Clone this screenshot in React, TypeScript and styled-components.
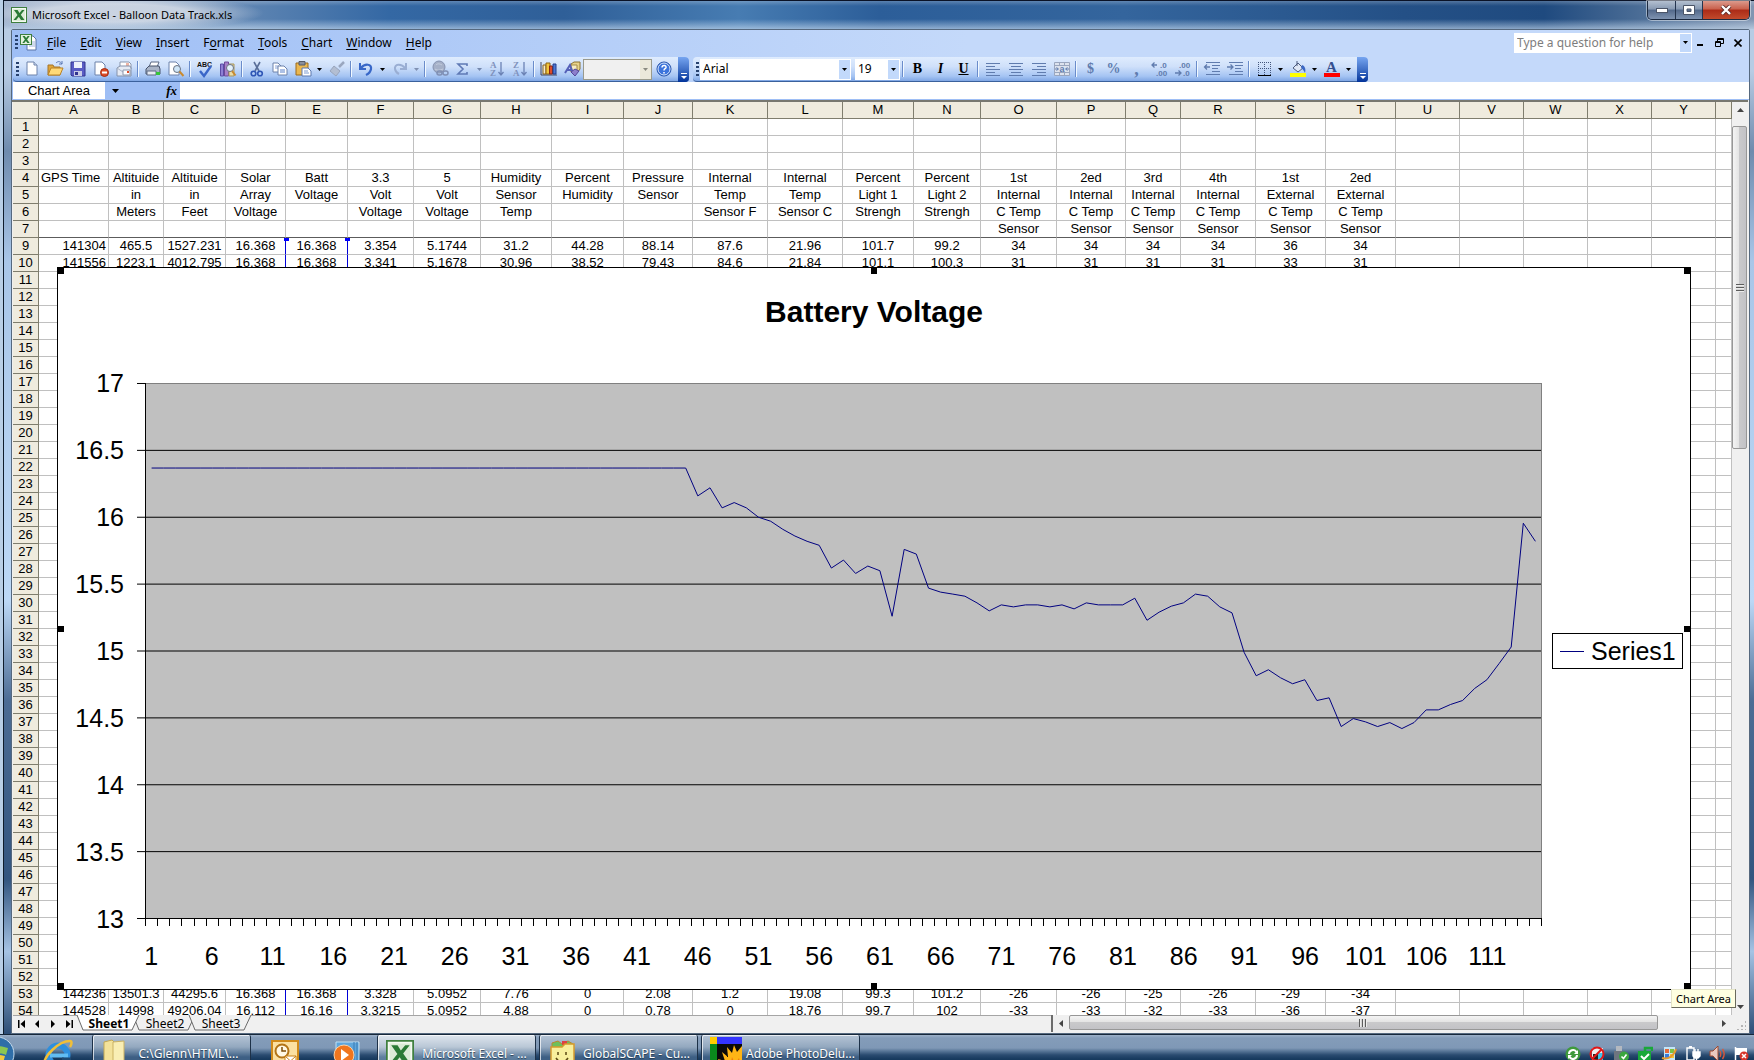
import React from "react";
import styled, { createGlobalStyle, css } from "styled-components";

const UI = `"Noto Sans", "Open Sans", sans-serif`;
const ARIAL = `"Liberation Sans", Arial, sans-serif`;

const Global = createGlobalStyle`
  * { box-sizing: border-box; }
  html, body, #root { height: 100%; margin: 0; }
  body { overflow: hidden; background: #16243a; font: 12px/16px ${UI}; color: #000; }
  button, select, input { font: inherit; color: inherit; margin: 0; padding: 0; border: 0; border-radius: 0; background: none; }
  svg { display: block; flex: none; }
`;

const Desktop = styled.div`
  height: 100vh;
  min-height: 600px;
  display: flex;
  flex-direction: column;
  overflow: hidden;
`;

const Window = styled.main`
  flex: 1;
  min-height: 0;
  display: flex;
  flex-direction: column;
  margin-left: 3px;
  border-left: 1px solid #101d2c;
  border-top: 1px solid #0a1226;
  box-shadow: -3px 0 0 #b9cfe6;
  padding: 0 4px 0 7px;
  background: linear-gradient(180deg, #b8cce4 0, #b8cce4 70px, #6f8bad 150px, #a9c6e8 260px, #bcd8f6 600px, #4c6c94 700px, #33557f 85%, #a5c3e4 92%, #2c4d76 100%);
`;

const TitleBar = styled.header`
  height: 28px;
  flex: none;
  display: flex;
  align-items: flex-start;
  margin: 0 -4px 0 -7px;
  padding-left: 7px;
  background:
    linear-gradient(180deg, rgba(255,255,255,.22) 0, rgba(255,255,255,0) 5px, rgba(255,255,255,0) 18px, rgba(210,228,246,.6) 100%),
    radial-gradient(ellipse 150px 18px at 110px 12px, rgba(216,222,232,.85) 50%, rgba(216,222,232,0) 100%),
    linear-gradient(90deg, #8ea3c2 0, #5d84b2 14%, #3468a4 22%, #2f5f98 32%, #477cb2 42%, #2c5e99 50%, #34659d 64%, #245086 80%, #1f4a7f 88%, #4f7098 94%, #8296b2 100%);
`;

const TitleText = styled.h1`
  flex: 1;
  margin: 6px 0 0 5px;
  font: 400 11px/16px ${UI};
`;

const TitleIcon = styled.span`
  margin-top: 6px;
`;

const Caption = styled.div`
  display: flex;
  height: 19px;
  margin-right: 4px;
  border: 1px solid #1c2a40;
  border-top: 0;
  border-radius: 0 0 5px 5px;
  overflow: hidden;
  box-shadow: 0 0 0 1px rgba(255, 255, 255, 0.45);
`;

const CaptionButton = styled.button<{ $close?: boolean }>`
  width: ${(p) => (p.$close ? 47 : 27)}px;
  display: flex;
  align-items: center;
  justify-content: center;
  background: ${(p) =>
    p.$close
      ? "linear-gradient(180deg, #dc9a8c 0, #c9604c 45%, #ab2b17 50%, #c24a2c 100%)"
      : "linear-gradient(180deg, #b4c0d0 0, #8799b2 45%, #53698b 50%, #7f93b0 100%)"};
  & + & { border-left: 1px solid #24344e; }
`;

const Client = styled.div`
  flex: 1;
  min-height: 0;
  display: flex;
  flex-direction: column;
  border: 1px solid #56697f;
  border-radius: 2px 2px 0 0;
  background: #f0f0f0;
`;

const CommandArea = styled.div`
  flex: none;
  background: linear-gradient(90deg, #9ebef5 0, #c4d9fa 55%);
`;

const MenuBar = styled.nav`
  height: 27px;
  display: flex;
  align-items: center;
  padding: 0 0 2px 3px;
`;

const Grip = styled.span`
  width: 3px;
  height: 15px;
  flex: none;
  background: repeating-linear-gradient(180deg, #27416f 0, #27416f 2px, transparent 2px, transparent 4px);
`;

const MenuIcon = styled.span`
  margin: 0 2px;
`;

const MenuButton = styled.button`
  padding: 0 7px;
  line-height: 20px;
  u { text-underline-offset: 2px; }
`;

const HelpBox = styled.label`
  margin-left: auto;
  width: 178px;
  height: 20px;
  display: flex;
  background: #fff;
  padding: 1px;
  input { flex: 1; min-width: 0; padding-left: 2px; outline: none; }
  input::placeholder { color: #7d7d7d; opacity: 1; }
`;

const DropMark = styled.span<{ $muted?: boolean }>`
  width: 11px;
  flex: none;
  display: flex;
  align-items: center;
  justify-content: center;
  background: ${(p) => (p.$muted ? "#ebe8da" : "#c2d9fb")};
  pointer-events: none;
`;

const DocButtons = styled.div`
  display: flex;
  gap: 3px;
  padding-right: 3px;
  button { width: 16px; height: 18px; display: flex; align-items: center; justify-content: center; }
`;

const ToolbarRow = styled.div`
  display: flex;
  gap: 4px;
  padding-left: 1px;
`;

const Toolbar = styled.div`
  height: 25px;
  display: flex;
  align-items: center;
  padding-left: 3px;
  border-radius: 4px;
  border-bottom: 1px solid #3b619c;
  background: linear-gradient(180deg, #dfecfe 0, #cfe0fa 40%, #a5c4f3 80%, #7fa6e4 100%);
`;

const ToolButton = styled.button`
  width: 23px;
  height: 22px;
  display: flex;
  align-items: center;
  justify-content: center;
`;

const ArrowButton = styled.button`
  width: 11px;
  height: 22px;
  display: flex;
  align-items: center;
  justify-content: center;
`;

const Separator = styled.span`
  width: 6px;
  height: 16px;
  flex: none;
  background: linear-gradient(90deg, transparent 2px, #6a8ccb 2px, #6a8ccb 3px, #f1f9ff 3px, #f1f9ff 4px, transparent 4px);
`;

const EndCap = styled.button`
  width: 11px;
  height: 25px;
  margin: 0 0 -1px 3px;
  display: flex;
  align-items: flex-end;
  justify-content: center;
  padding-bottom: 3px;
  border-radius: 0 4px 4px 0;
  background: linear-gradient(180deg, #76a5f0 0, #3f6fc6 50%, #02339a 100%);
`;

const Combo = styled.label<{ $w: number; $disabled?: boolean }>`
  width: ${(p) => p.$w}px;
  height: 21px;
  display: flex;
  padding: 1px;
  background: ${(p) => (p.$disabled ? "#f0f0f0" : "#fff")};
  ${(p) => p.$disabled && css`border: 1px solid #9a9a8c; padding: 0;`}
  & + & { margin-left: 4px; }
  select { appearance: none; flex: 1; min-width: 0; padding-left: 2px; outline: none; opacity: 1; }
`;

const GripSpace = styled.span`
  display: flex;
  width: 4px;
`;

const Letter = styled.span<{ $i?: boolean; $u?: boolean; $c?: string; $s?: number }>`
  font: ${(p) => (p.$i ? "italic " : "")}bold ${(p) => p.$s || 14}px/16px "Liberation Serif", "Times New Roman", serif;
  text-decoration: ${(p) => (p.$u ? "underline" : "none")};
  color: ${(p) => p.$c || "#000"};
`;

const FormulaBar = styled.div`
  height: 18px;
  display: flex;
  background: #9ebef5;
  padding: 0 0 1px 1px;
`;

const NameBox = styled.input`
  width: 92px;
  background: #fff;
  font: 13px/16px ${ARIAL};
  text-align: center;
`;

const NameDrop = styled.button`
  width: 20px;
  display: flex;
  align-items: center;
  justify-content: center;
`;

const FxButton = styled.button`
  margin-left: auto;
  padding-right: 3px;
  font: italic bold 13px/16px "Liberation Serif", serif;
`;

const FxZone = styled.div`
  width: 75px;
  display: flex;
`;

const FormulaInput = styled.input`
  flex: 1;
  background: #fff;
  outline: none;
`;

const Workspace = styled.div`
  position: relative;
  flex: 1;
  min-height: 0;
  display: flex;
  margin-right: 1px;
  border-top: 2px solid #77776f;
  padding-left: 1px;
  background: #f0f0f0;
`;

const GridPane = styled.section`
  position: relative;
  flex: 1;
  min-width: 0;
  overflow: hidden;
  background: #fff;
`;

const Sheet = styled.table`
  width: 100%;
  table-layout: fixed;
  border-collapse: separate;
  border-spacing: 0;
  font: 13px/16px ${ARIAL};
`;

const HeadCell = styled.th`
  height: 17px;
  padding: 0;
  font-weight: 400;
  text-align: center;
  background: #efebde;
  border-right: 1px solid #7f7d6d;
  border-bottom: 1px solid #7f7d6d;
`;

const Cell = styled.td<{ $align?: string; $frozen?: boolean; $range?: boolean }>`
  position: relative;
  height: 17px;
  padding: 0 2px;
  text-align: ${(p) => p.$align || "center"};
  white-space: nowrap;
  border-right: 1px solid ${(p) => (p.$range ? "#0000d8" : "#c0c0c0")};
  border-bottom: 1px solid ${(p) => (p.$frozen ? "#5c5c5c" : "#c0c0c0")};
`;

const RangeHandle = styled.i<{ $right?: boolean }>`
  position: absolute;
  top: 0;
  ${(p) => (p.$right ? "right: -3px;" : "left: -2px;")}
  width: 5px;
  height: 3px;
  background: #0000ff;
`;

/* ---- chart ---- */

const ChartFrame = styled.figure`
  position: absolute;
  top: 165px;
  left: 44px;
  right: 41px;
  bottom: 25px;
  margin: 0;
  display: flex;
  flex-direction: column;
  background: #fff;
  border: 1px solid #000;
  font: 25px/30px ${ARIAL};
`;

const Handle = styled.i<{ $x: string; $y: string }>`
  position: absolute;
  width: 6px;
  height: 6px;
  background: #000;
  left: ${(p) => ({ l: "0", c: "calc(50% - 3px)", r: "calc(100% - 6px)" } as Record<string, string>)[p.$x]};
  top: ${(p) => ({ t: "0", m: "calc(50% - 3px)", b: "calc(100% - 6px)" } as Record<string, string>)[p.$y]};
`;

const ChartTitle = styled.figcaption`
  flex: none;
  height: 115px;
  padding-top: 27px;
  text-align: center;
  font: 700 30px/34px ${ARIAL};
`;

const ChartBody = styled.div`
  flex: 1;
  min-height: 0;
  display: grid;
  grid-template-columns: 87px 1fr 148px;
  grid-template-rows: 1fr 70px;
`;

const YAxis = styled.div`
  display: flex;
  flex-direction: column;
  justify-content: space-between;
  margin: -15px 0;
  padding-right: 21px;
  text-align: right;
`;

const Plot = styled.svg`
  width: 100%;
  height: 100%;
  min-height: 0;
  overflow: visible;
  shape-rendering: crispEdges;
`;

const XAxis = styled.div`
  grid-column: 2;
  display: grid;
  grid-template-columns: repeat(23, 1fr);
  padding-top: 22px;
  margin: 0 calc(200% / 115) 0 calc(-200% / 115);
  text-align: center;
`;

const Legend = styled.div`
  align-self: center;
  display: flex;
  align-items: center;
  gap: 7px;
  height: 36px;
  margin: 0 7px 0 10px;
  padding-left: 7px;
  border: 1px solid #000;
  &::before { content: ""; width: 24px; border-top: 1px solid #000080; }
`;

const Tooltip = styled.div`
  position: absolute;
  right: 12px;
  bottom: 7px;
  padding: 0 4px;
  font-size: 11px;
  line-height: 17px;
  background: #ffffe1;
  border: 1px solid #e4e4c8;
  border-right-color: #6a6a5c;
  border-bottom-color: #6a6a5c;
`;

/* ---- scroll bars ---- */

const VScroll = styled.div`
  width: 16px;
  flex: none;
  display: flex;
  flex-direction: column;
  background: #f0f0f0;
`;

const ScrollArrow = styled.button`
  width: 16px;
  height: 16px;
  flex: none;
  display: flex;
  align-items: center;
  justify-content: center;
`;

const Track = styled.div<{ $row?: boolean }>`
  flex: 1;
  min-width: 0;
  min-height: 0;
  display: flex;
  flex-direction: ${(p) => (p.$row ? "row" : "column")};
  padding: ${(p) => (p.$row ? "0" : "8px 0 0")};
`;

const Thumb = styled.div<{ $row?: boolean }>`
  ${(p) => (p.$row ? "width: 91%; height: 15px;" : "height: 37%; width: 15px;")}
  display: flex;
  align-items: center;
  justify-content: center;
  border: 1px solid #979797;
  border-radius: 2px;
  background: linear-gradient(${(p) => (p.$row ? 180 : 90)}deg, #f4f4f4 0, #e4e4e4 45%, #c9c9cb 50%, #c2c2c6 100%);
`;

const ThumbGrip = styled.i<{ $row?: boolean }>`
  width: 8px;
  height: 8px;
  background: repeating-linear-gradient(${(p) => (p.$row ? 90 : 180)}deg, #5d5d5d 0, #5d5d5d 1px, #f8f8f8 1px, #c8c8c8 3px);
`;

const SheetBar = styled.footer`
  height: 18px;
  flex: none;
  display: flex;
  padding: 0 1px 1px 1px;
  background: #f0f0f0;
`;

const TabZone = styled.div`
  width: 59.8%;
  flex: none;
  display: flex;
  border-top: 1px solid #a5a5a5;
`;

const NavButton = styled.button`
  width: 16px;
  display: flex;
  align-items: center;
  justify-content: center;
`;

const SheetTab = styled.button<{ $active?: boolean }>`
  position: relative;
  width: 56px;
  height: 16px;
  line-height: 14px;
  font-weight: ${(p) => (p.$active ? 700 : 400)};
  svg { position: absolute; left: -5px; top: -1px; z-index: 0; }
  span { position: relative; z-index: 1; }
  ${(p) => p.$active && css`z-index: 2;`}
`;

const Tabs = styled.div`
  display: flex;
  margin-left: 4px;
`;

const HScroll = styled.div`
  flex: 1;
  display: flex;
  border-left: 2px solid #6c6c6c;
`;

const SizeGrip = styled.i`
  align-self: flex-end;
  width: 10px;
  height: 10px;
  margin: 0 2px 2px 4px;
  background: radial-gradient(circle, #b4b4b4 1px, transparent 1px) 0 0 / 4px 4px;
  clip-path: polygon(100% 0, 100% 100%, 0 100%);
`;

/* ---- task bar ---- */

const TaskbarClip = styled.div`
  height: 26px;
  flex: none;
  overflow: hidden;
  border-top: 1px solid #16273a;
`;

const Taskbar = styled.div`
  position: relative;
  height: 38px;
  display: flex;
  background: linear-gradient(180deg, #9db1c9 0, #849cb9 3px, #7f98b6 13px, #4d6c8e 17px, #2a4b70 20px, #173a5e 24px, #173a5e 100%);
`;

const StartSlot = styled.button`
  width: 15px;
  margin-right: 6px;
  overflow: hidden;
  display: flex;
  justify-content: flex-end;
  padding-top: 1px;
`;

const TaskIcon = styled.button<{ $w: number }>`
  width: ${(p) => p.$w}px;
  display: flex;
  align-items: center;
  justify-content: center;
`;

const TaskButton = styled.button<{ $active?: boolean }>`
  width: 159px;
  margin-right: 3px;
  display: flex;
  align-items: center;
  padding-left: 8px;
  color: #fff;
  white-space: nowrap;
  text-align: left;
  border: 1px solid #1d3148;
  border-top: 0;
  border-radius: 2px;
  box-shadow: inset 1px 1px 0 rgba(255, 255, 255, 0.7);
  background: ${(p) =>
    p.$active
      ? "linear-gradient(180deg, #dfe6ee 0, #b9c7d6 12px, #8ea4bb 17px, #5f7f9f 22px, #4f7294 100%)"
      : "linear-gradient(180deg, #b6c5d6 0, #93a8bf 12px, #6884a2 17px, #3d5f84 22px, #3d5f84 100%)"};
  span { flex: 1; text-align: center; text-shadow: 0 1px 1px #22384f; }
`;

const Tray = styled.div`
  margin-left: auto;
  display: flex;
  align-items: center;
  padding-right: 1px;
`;

/* ---- icons ---- */

const Down = ({ c = "#000" }: { c?: string }) => (
  <svg width="5" height="3" viewBox="0 0 5 3"><path d="M0 0h5L2.5 3z" fill={c} /></svg>
);

const Ic = ({ children, s = 18 }: { children: React.ReactNode; s?: number }) => (
  <svg width={s} height={s} viewBox="0 0 18 18" fill="none">{children}</svg>
);

const Page = ({ x = 3, y = 2, w = 10, h = 13 }) => (
  <path d={`M${x} ${y}h${w - 3}l3 3v${h - 3}h${-w}z`} fill="#fff" stroke="#6c82ab" />
);

const decimalText = { fontFamily: "Liberation Sans", fontWeight: 700, fontSize: 8, fill: "#607cae" };

const icons: Record<string, React.ReactNode> = {
  New: <Ic><Page x={4} y={2} w={10} h={13} /><path d="M11 2v3h3" stroke="#6c82ab" fill="#d6e2f5" /></Ic>,
  Open: <Ic><path d="M2 15V5h5l1 2h6v8z" fill="#e0a537" stroke="#a4752a" /><path d="M2 15l3-7h12l-3 7z" fill="#ffd978" stroke="#b98226" /><path d="M10 3c2-2 4-2 6 1M16 1v3h-3" stroke="#5b78b5" /></Ic>,
  Save: <Ic><path d="M2 2h14v14H3l-1-1z" fill="#5a5cc4" stroke="#32348f" /><path d="M5 2h8v6H5z" fill="#eef1fb" /><path d="M5 11h8v5H5z" fill="#c9cbe6" /><path d="M6 12h3v3H6z" fill="#32348f" /></Ic>,
  Permission: <Ic><Page x={3} y={2} w={10} h={13} /><circle cx="12.500" cy="12.500" r="4" fill="#dc4a26" stroke="#a32c12" /><path d="M10 12.500h5" stroke="#fff" strokeWidth="2" /></Ic>,
  "E-mail": <Ic><path d="M5 8V2h9l2 2v5z" fill="#fff" stroke="#8b97ad" /><path d="M11 4h3M11 6h3" stroke="#dd6a4a" /><path d="M2 8l3-2h10l1 2v8H2z" fill="#e6ebf4" stroke="#8592aa" /><path d="M2 8l6 4 4-1" stroke="#a8b3c6" /><path d="M8 10h7v5H8z" fill="#fff" stroke="#8b97ad" /><path d="M12 11h2v2h-2z" fill="#dd4b2a" /></Ic>,
  Print: <Ic><path d="M5 7l2-5h8l-2 5z" fill="#fff" stroke="#5d6b85" /><path d="M2 9l3-3h10l1 3v5H2z" fill="#a9b4c7" stroke="#46526a" /><path d="M3 11h9v4H3z" fill="#e8ecf3" stroke="#5d6b85" /><path d="M12 12h4v3h-4z" fill="#35c439" /></Ic>,
  "Print preview": <Ic><Page x={2} y={2} w={10} h={13} /><circle cx="10" cy="9" r="3.500" fill="#cfe6f8" stroke="#6a7280" /><path d="M12.500 11.500l4 4.500" stroke="#c98a2f" strokeWidth="2" /></Ic>,
  Spelling: <Ic><text x="1" y="7" fontFamily="Liberation Sans" fontWeight="700" fontSize="7" fill="#111">ABC</text><path d="M4 11l4 5 7-10" stroke="#3a66c8" strokeWidth="2.400" /></Ic>,
  Research: <Ic><path d="M1.500 4h3v12h-3z" fill="#8f7fd4" stroke="#5b4ca6" /><path d="M5.500 2h4v14h-4z" fill="#a77fca" stroke="#6f4a98" /><path d="M10 4h5v12h-5z" fill="#ecdca6" stroke="#a8965a" /><circle cx="11" cy="8" r="3.500" fill="#e3f1fc" stroke="#6a7280" /><path d="M13 11l3.500 4.500" stroke="#c98a2f" strokeWidth="2" /></Ic>,
  Cut: <Ic><path d="M6 2l5 9M12 2l-5 9" stroke="#5a6f99" strokeWidth="1.600" /><circle cx="5.500" cy="13.500" r="2.300" stroke="#2e55b5" strokeWidth="1.600" /><circle cx="12" cy="13.500" r="2.300" stroke="#2e55b5" strokeWidth="1.600" /></Ic>,
  Copy: <Ic><Page x={2} y={3} w={8} h={9} /><path d="M4 6h4M4 8h4" stroke="#8aa4d6" /><Page x={7} y={6} w={9} h={9} /><path d="M9 10h5M9 12h5" stroke="#5b82cc" /></Ic>,
  Paste: <Ic><path d="M2 3h12v12H2z" fill="#eab750" stroke="#9b6a1c" /><path d="M5 1.500h6V5H5z" fill="#8a8f9c" stroke="#555b68" /><path d="M8 8h6l3 3v5H8z" fill="#fff" stroke="#5d79b0" /><path d="M10 11h4M10 13h5" stroke="#7d9ad0" /></Ic>,
  "Format painter": <Ic><path d="M16 2l-5 5" stroke="#9aa7bf" strokeWidth="2.500" /><path d="M6 6l6 5-4 5-6-5z" fill="#b3bed2" stroke="#98a5bd" /></Ic>,
  Undo: <Ic><path d="M3 3v6h6" stroke="#3867c8" strokeWidth="2" /><path d="M4 8c4-5 11-4 10 1-.500 3-3 5-5 6" stroke="#3867c8" strokeWidth="2.200" /></Ic>,
  Redo: <Ic><path d="M15 3v6H9" stroke="#9aaed3" strokeWidth="2" /><path d="M14 8C10 3 3 4 4 9c.500 3 2 4 4 5" stroke="#9aaed3" strokeWidth="2" /></Ic>,
  Hyperlink: <Ic><circle cx="8" cy="7" r="6" fill="#a5b0c7" stroke="#8592b0" /><path d="M5 5c2-2 4-1 6 0M4 9c3 2 5 1 8 0" stroke="#c5cedf" /><rect x="6" y="11" width="5" height="4" rx="2" stroke="#7f8fb4" strokeWidth="1.500" /><rect x="12" y="11" width="5" height="4" rx="2" stroke="#7f8fb4" strokeWidth="1.500" /></Ic>,
  AutoSum: <Ic><path d="M13 6V4H4l5 5-5 5h9v-2" stroke="#5f79b5" strokeWidth="1.600" /></Ic>,
  Chart: <Ic><path d="M1 2v13h16" stroke="#43455c" /><path d="M3 5h3v9H3z" fill="#f3ead0" stroke="#8c6212" /><path d="M6 3h4v11H6z" fill="#f3c43c" stroke="#8c6212" /><path d="M9.500 6h3v8h-3z" fill="#dc4b2a" stroke="#8d2510" /><path d="M13 4h3v10h-3z" fill="#4a76d4" stroke="#223f8e" /></Ic>,
  Drawing: <Ic><path d="M8 4l3-2h6v7l-2 3H8z" fill="#e7d28a" stroke="#8c7330" /><path d="M8 5h6v6H8z" fill="#f6ecc4" stroke="#a28b48" /><path d="M2 13L7 5l3 8M4 10h5" stroke="#5560b8" strokeWidth="2" /><path d="M8 12l4-3 4 2-4 5z" fill="#8c7ecb" stroke="#53479b" /></Ic>,
  Help: <Ic><circle cx="9" cy="9" r="7" fill="#3c74dc" stroke="#1d4ba4" /><circle cx="9" cy="9" r="6" stroke="#d4e4fb" /><path d="M7 7.500c0-3 4.500-2.500 4 0-.300 1.300-2 1.200-2 3M9 12v1.500" stroke="#fff" strokeWidth="1.500" /></Ic>,
  "Align left": <Ic><path d="M2 3h14M2 6h9M2 9h14M2 12h9M2 15h14" stroke="#607cae" shapeRendering="crispEdges" /></Ic>,
  "Align center": <Ic><path d="M2 3h14M4 6h10M2 9h14M4 12h10M2 15h14" stroke="#607cae" shapeRendering="crispEdges" /></Ic>,
  "Align right": <Ic><path d="M2 3h14M7 6h9M2 9h14M7 12h9M2 15h14" stroke="#607cae" shapeRendering="crispEdges" /></Ic>,
  Merge: <Ic><path d="M1.500 2.500h15v13h-15zM1.500 5.500h15M1.500 12.500h15M6.500 2.500v3M11.500 2.500v3M6.500 12.500v3M11.500 12.500v3" fill="#dde3ee" stroke="#9aa6be" /><path d="M2 9h3M13 9h3M3.500 7.500L5.500 9l-2 1.500M14.500 7.500L12.500 9l2 1.500" stroke="#607cae" /><text x="6.500" y="11.500" fontFamily="Liberation Sans" fontWeight="700" fontSize="9" fill="#607cae">a</text></Ic>,
  "Increase decimal": <Ic><path d="M1 5h5M3.500 2.500L1 5l2.500 2.500" stroke="#607cae" strokeWidth="1.300" /><text x="9" y="8" {...decimalText}>.0</text><text x="5" y="16" {...decimalText}>.00</text></Ic>,
  "Decrease decimal": <Ic><text x="5" y="8" {...decimalText}>.00</text><path d="M1 13h6M4.500 10.500L7 13l-2.500 2.500" stroke="#607cae" strokeWidth="1.300" /><text x="9" y="16" {...decimalText}>.0</text></Ic>,
  "Decrease indent": <Ic><path d="M3 2.500h14M9 5.500h8M9 8.500h6M9 11.500h8M3 14.500h14" stroke="#607cae" shapeRendering="crispEdges" /><path d="M1.500 7H7M4 4.500L1.500 7 4 9.500" stroke="#607cae" strokeWidth="1.300" /></Ic>,
  "Increase indent": <Ic><path d="M3 2.500h14M9 5.500h8M9 8.500h6M9 11.500h8M3 14.500h14" stroke="#607cae" shapeRendering="crispEdges" /><path d="M1 7h6M4.500 4.500L7 7 4.500 9.500" stroke="#607cae" strokeWidth="1.300" /></Ic>,
  Borders: <Ic><path d="M3 2.500h13M3 8.500h13M3.500 2v13M9.500 2v13M15.500 2v13" stroke="#43557c" strokeDasharray="1 1" shapeRendering="crispEdges" /><path d="M3 15.500h13" stroke="#000" shapeRendering="crispEdges" /></Ic>,
  "Fill color": <Ic><path d="M8 1v5M4 8l5-5 5 5-5 4z" fill="#dfe7f5" stroke="#4c5b7e" /><path d="M13 5c3 1 4 4 3 8-1-2-2-4-4-5z" fill="#3c68c4" /><path d="M1 13h16v4H1z" fill="#ff0" /></Ic>,
  "Font color": <Ic><text x="3" y="12" fontFamily="Liberation Serif" fontWeight="700" fontSize="15" fill="#34508f">A</text><path d="M1 13h16v4H1z" fill="#f00" /></Ic>,
};

const SortIcon = ({ a, b }: { a: string; b: string }) => (
  <Ic>
    <text x="2" y="8" fontFamily="Liberation Serif" fontWeight="700" fontSize="9" fill="#7f92bd">{a}</text>
    <text x="2" y="16" fontFamily="Liberation Serif" fontWeight="700" fontSize="9" fill="#7f92bd">{b}</text>
    <path d="M13 2v13M10.500 12l2.500 3 2.500-3" stroke="#6c83b5" strokeWidth="1.300" />
  </Ic>
);

const ExcelIcon = ({ s = 16 }: { s?: number }) => (
  <svg width={s} height={s} viewBox="0 0 16 16">
    <rect x=".5" y=".5" width="15" height="15" fill="#f4faf1" stroke="#3f7f3e" />
    <rect x="2" y="2" width="12" height="12" fill="#dcebd6" />
    <path d="M3 3h3.600l1.900 3L11 3h2.500L9.800 7.700 13.500 13H10L7.800 9.800 5.200 13H2.500l4-5z" fill="#2a7a35" />
  </svg>
);

const ExcelDocIcon = () => (
  <svg width="18" height="17" viewBox="0 0 18 17">
    <path d="M7 2h6l3 3v11H7z" fill="#fff" stroke="#5b74a8" />
    <path d="M9 8h6M9 10h6M9 12h6" stroke="#9db3dc" />
    <rect x=".5" y=".5" width="11" height="10" fill="#e3f1dd" stroke="#3f7f3e" />
    <path d="M2.500 2h2.300l1.300 2 1.600-2h2L7.100 5.500 9.700 9H7.400L5.900 7 4.200 9H2.300l2.600-3.500z" fill="#2a7a35" />
  </svg>
);

/* ---- data ---- */

const columns = [
  ["A", 70], ["B", 55], ["C", 62], ["D", 60], ["E", 62], ["F", 66], ["G", 67], ["H", 71], ["I", 72],
  ["J", 69], ["K", 75], ["L", 75], ["M", 71], ["N", 67], ["O", 76], ["P", 69], ["Q", 55], ["R", 75],
  ["S", 70], ["T", 70], ["U", 64], ["V", 64], ["W", 64], ["X", 64], ["Y", 64],
] as [string, number][];

const rowData: Record<number, string[]> = {
  4: "GPS Time|Altituide|Altituide|Solar|Batt|3.3|5|Humidity|Percent|Pressure|Internal|Internal|Percent|Percent|1st|2ed|3rd|4th|1st|2ed".split("|"),
  5: "|in|in|Array|Voltage|Volt|Volt|Sensor|Humidity|Sensor|Temp|Temp|Light 1|Light 2|Internal|Internal|Internal|Internal|External|External".split("|"),
  6: "|Meters|Feet|Voltage||Voltage|Voltage|Temp|||Sensor F|Sensor C|Strengh|Strengh|C Temp|C Temp|C Temp|C Temp|C Temp|C Temp".split("|"),
  7: "||||||||||||||Sensor|Sensor|Sensor|Sensor|Sensor|Sensor".split("|"),
  9: "141304|465.5|1527.231|16.368|16.368|3.354|5.1744|31.2|44.28|88.14|87.6|21.96|101.7|99.2|34|34|34|34|36|34".split("|"),
  10: "141556|1223.1|4012.795|16.368|16.368|3.341|5.1678|30.96|38.52|79.43|84.6|21.84|101.1|100.3|31|31|31|31|33|31".split("|"),
  53: "144236|13501.3|44295.6|16.368|16.368|3.328|5.0952|7.76|0|2.08|1.2|19.08|99.3|101.2|-26|-26|-25|-26|-29|-34".split("|"),
  54: "144528|14998|49206.04|16.112|16.16|3.3215|5.0952|4.88|0|0.78|0|18.76|99.7|102|-33|-33|-32|-33|-36|-37".split("|"),
};

const rowNumbers = Array.from({ length: 54 }, (_, i) => i + 1).filter((n) => n !== 8);

const voltage = [
  ...Array(45).fill(16.368),
  16.16, 16.22, 16.07, 16.11, 16.07, 16, 15.97, 15.91, 15.86, 15.82, 15.79, 15.62, 15.68, 15.58, 15.635,
  15.6, 15.26, 15.76, 15.725, 15.47, 15.44, 15.425, 15.41, 15.36, 15.3, 15.345, 15.33, 15.345, 15.345,
  15.33, 15.345, 15.315, 15.36, 15.345, 15.345, 15.345, 15.395, 15.23, 15.29, 15.335, 15.36, 15.425,
  15.41, 15.33, 15.285, 14.99, 14.815, 14.86, 14.8, 14.755, 14.785, 14.63, 14.65, 14.435, 14.495, 14.47,
  14.435, 14.465, 14.42, 14.465, 14.56, 14.56, 14.6, 14.63, 14.72, 14.785, 14.905, 15.03, 15.955, 15.82,
];

const PLOT_W = 1397;
const PLOT_H = 537;
const step = (PLOT_W - 1) / 115;
const linePoints = voltage
  .map((v, i) => `${((i + 0.5) * step + 0.5).toFixed(1)},${((17 - v) * 134 + 0.5).toFixed(1)}`)
  .join(" ");
const yLabels = ["17", "16.5", "16", "15.5", "15", "14.5", "14", "13.5", "13"];
const xLabels = Array.from({ length: 23 }, (_, i) => 1 + i * 5);

const Tool = ({ name, children }: { name: string; children?: React.ReactNode }) => (
  <ToolButton aria-label={name}>{children || icons[name]}</ToolButton>
);
const Drop = ({ name, c }: { name: string; c?: string }) => (
  <ArrowButton aria-label={`${name} options`}><Down c={c} /></ArrowButton>
);
const Cap = () => (
  <EndCap aria-label="Toolbar options">
    <svg width="6" height="6" viewBox="0 0 6 6"><path d="M0 .5h6" stroke="#fff" /><path d="M0 3h6L3 6z" fill="#fff" /></svg>
  </EndCap>
);

const menus = ["File", "Edit", "View", "Insert", "Format", "Tools", "Chart", "Window", "Help"];

function Chart() {
  return (
    <ChartFrame>
      <ChartTitle>Battery Voltage</ChartTitle>
      <ChartBody>
        <YAxis>{yLabels.map((l) => <span key={l}>{l}</span>)}</YAxis>
        <Plot viewBox={`0 0 ${PLOT_W} ${PLOT_H}`} preserveAspectRatio="none">
          <rect x=".5" y=".5" width={PLOT_W - 1} height={PLOT_H - 1} fill="#c0c0c0" stroke="#808080" />
          {yLabels.map((l, i) => (
            <path key={l} d={`M-8 ${i * 67 + 0.5}H${i ? PLOT_W - 1 : 0}`} stroke="#000" />
          ))}
          <path d={`M.5 0V${PLOT_H}`} stroke="#000" />
          {Array.from({ length: 116 }, (_, i) => (
            <path key={i} d={`M${Math.round(i * step) + 0.5} ${PLOT_H - 1}v8`} stroke="#000" />
          ))}
          <polyline points={linePoints} fill="none" stroke="#000080" />
        </Plot>
        <Legend>Series1</Legend>
        <XAxis>{xLabels.map((l) => <span key={l}>{l}</span>)}</XAxis>
      </ChartBody>
      {["lt", "ct", "rt", "lm", "rm", "lb", "cb", "rb"].map((p) => <Handle key={p} $x={p[0]} $y={p[1]} />)}
    </ChartFrame>
  );
}

function Grid() {
  return (
    <Sheet>
      <colgroup>
        <col width={26} />
        {columns.map(([c, w]) => <col key={c} width={w} />)}
        <col />
      </colgroup>
      <thead>
        <tr>
          <HeadCell />
          {columns.map(([c]) => <HeadCell key={c} scope="col">{c}</HeadCell>)}
          <HeadCell />
        </tr>
      </thead>
      <tbody>
        {rowNumbers.map((n) => (
          <tr key={n}>
            <HeadCell scope="row">{n}</HeadCell>
            {columns.map(([c], i) => (
              <Cell
                key={c}
                $align={i === 0 ? (n < 9 ? "left" : "right") : "center"}
                $frozen={n === 7}
                $range={n > 8 && (c === "D" || c === "E")}
              >
                {rowData[n]?.[i]}
                {n === 9 && c === "E" && <><RangeHandle /><RangeHandle $right /></>}
              </Cell>
            ))}
            <Cell $frozen={n === 7} />
          </tr>
        ))}
      </tbody>
    </Sheet>
  );
}

const TabShape = ({ active }: { active?: boolean }) => (
  <svg width="68" height="16" viewBox="0 0 68 16">
    <path d="M1 0l6 15h49l7-15" fill={active ? "#fff" : "#f0f0f0"} stroke="#6a6a6a" />
  </svg>
);

export default function App() {
  return (
    <Desktop>
      <Global />
      <Window>
        <TitleBar>
          <TitleIcon><ExcelIcon /></TitleIcon>
          <TitleText>Microsoft Excel - Balloon Data Track.xls</TitleText>
          <Caption>
            <CaptionButton aria-label="Minimize">
              <svg width="12" height="5"><rect x=".5" y=".5" width="11" height="4" fill="#fff" stroke="#4b5568" /></svg>
            </CaptionButton>
            <CaptionButton aria-label="Maximize">
              <svg width="12" height="10"><path d="M.5.5h11v9H.5zM4 4h4v2.500H4z" fill="#fff" fillRule="evenodd" stroke="#4b5568" /></svg>
            </CaptionButton>
            <CaptionButton $close aria-label="Close">
              <svg width="12" height="10" viewBox="0 0 12 10"><path d="M2 1l8 8M10 1L2 9" stroke="#5d2a26" strokeWidth="4" /><path d="M2 1l8 8M10 1L2 9" stroke="#fff" strokeWidth="2.400" /></svg>
            </CaptionButton>
          </Caption>
        </TitleBar>
        <Client>
          <CommandArea>
            <MenuBar>
              <Grip />
              <MenuIcon><ExcelDocIcon /></MenuIcon>
              {menus.map((m) => {
                const k = m === "Format" ? 1 : 0;
                return <MenuButton key={m}>{m.slice(0, k)}<u>{m[k]}</u>{m.slice(k + 1)}</MenuButton>;
              })}
              <HelpBox>
                <input placeholder="Type a question for help" aria-label="Type a question for help" />
                <DropMark><Down /></DropMark>
              </HelpBox>
              <DocButtons>
                <button aria-label="Minimize workbook"><svg width="8" height="9"><rect x="1" y="6" width="6" height="2" /></svg></button>
                <button aria-label="Restore workbook"><svg width="9" height="9" fill="none" stroke="#000"><path d="M2.500 3V.5h6v5H6M2.500 1.500h6M.5 3.500h5v5h-5zM.5 4.500h5" /></svg></button>
                <button aria-label="Close workbook"><svg width="8" height="8"><path d="M.5.5l7 7M7.500.5l-7 7" stroke="#000" strokeWidth="1.600" /></svg></button>
              </DocButtons>
            </MenuBar>
            <ToolbarRow>
              <Toolbar role="toolbar" aria-label="Standard">
                <GripSpace><Grip /></GripSpace>
                {["New", "Open", "Save", "Permission", "E-mail"].map((n) => <Tool key={n} name={n} />)}
                <Separator />
                <Tool name="Print" /><Tool name="Print preview" />
                <Separator />
                <Tool name="Spelling" /><Tool name="Research" />
                <Separator />
                <Tool name="Cut" /><Tool name="Copy" /><Tool name="Paste" /><Drop name="Paste" />
                <Tool name="Format painter" />
                <Separator />
                <Tool name="Undo" /><Drop name="Undo" /><Tool name="Redo" /><Drop name="Redo" c="#8091b2" />
                <Separator />
                <Tool name="Hyperlink" /><Tool name="AutoSum" /><Drop name="AutoSum" c="#7487ac" />
                <Tool name="Sort ascending"><SortIcon a="A" b="Z" /></Tool>
                <Tool name="Sort descending"><SortIcon a="Z" b="A" /></Tool>
                <Separator />
                <Tool name="Chart" /><Tool name="Drawing" />
                <Combo $w={69} $disabled>
                  <select disabled aria-label="Zoom" />
                  <DropMark $muted><Down c="#8a8a80" /></DropMark>
                </Combo>
                <Tool name="Help" />
                <Cap />
              </Toolbar>
              <Toolbar role="toolbar" aria-label="Formatting">
                <GripSpace><Grip /></GripSpace>
                <Combo $w={151}>
                  <select aria-label="Font"><option>Arial</option></select>
                  <DropMark><Down /></DropMark>
                </Combo>
                <Combo $w={45}>
                  <select aria-label="Font size"><option>19</option></select>
                  <DropMark><Down /></DropMark>
                </Combo>
                <Separator />
                <Tool name="Bold"><Letter>B</Letter></Tool>
                <Tool name="Italic"><Letter $i>I</Letter></Tool>
                <Tool name="Underline"><Letter $u>U</Letter></Tool>
                <Separator />
                <Tool name="Align left" /><Tool name="Align center" /><Tool name="Align right" /><Tool name="Merge" />
                <Separator />
                <Tool name="Currency"><Letter $c="#607cae">$</Letter></Tool>
                <Tool name="Percent"><Letter $c="#607cae">%</Letter></Tool>
                <Tool name="Comma"><Letter $c="#607cae" $s={18}>,</Letter></Tool>
                <Tool name="Increase decimal" /><Tool name="Decrease decimal" />
                <Separator />
                <Tool name="Decrease indent" /><Tool name="Increase indent" />
                <Separator />
                <Tool name="Borders" /><Drop name="Borders" />
                <Tool name="Fill color" /><Drop name="Fill color" />
                <Tool name="Font color" /><Drop name="Font color" />
                <Cap />
              </Toolbar>
            </ToolbarRow>
            <FormulaBar>
              <NameBox aria-label="Name box" defaultValue="Chart Area" />
              <FxZone>
                <NameDrop aria-label="Names"><svg width="7" height="4" viewBox="0 0 7 4"><path d="M0 0h7L3.500 4z" /></svg></NameDrop>
                <FxButton>fx</FxButton>
              </FxZone>
              <FormulaInput aria-label="Formula" />
            </FormulaBar>
          </CommandArea>
          <Workspace>
            <GridPane>
              <Grid />
              <Chart />
            </GridPane>
            <VScroll>
              <ScrollArrow aria-label="Scroll up"><svg width="7" height="4" viewBox="0 0 7 4"><path d="M0 4h7L3.500 0z" fill="#444" /></svg></ScrollArrow>
              <Track><Thumb><ThumbGrip /></Thumb></Track>
              <ScrollArrow aria-label="Scroll down"><svg width="7" height="4" viewBox="0 0 7 4"><path d="M0 0h7L3.500 4z" fill="#444" /></svg></ScrollArrow>
            </VScroll>
            <Tooltip role="tooltip">Chart Area</Tooltip>
          </Workspace>
          <SheetBar>
            <TabZone>
              <NavButton aria-label="First sheet"><svg width="7" height="8"><path d="M.5 0v8" stroke="#000" strokeWidth="2" /><path d="M7 0v8L2.500 4z" /></svg></NavButton>
              <NavButton aria-label="Previous sheet"><svg width="4" height="8"><path d="M4 0v8L0 4z" /></svg></NavButton>
              <NavButton aria-label="Next sheet"><svg width="4" height="8"><path d="M0 0v8l4-4z" /></svg></NavButton>
              <NavButton aria-label="Last sheet"><svg width="7" height="8"><path d="M6.500 0v8" stroke="#000" strokeWidth="2" /><path d="M0 0v8l4.500-4z" /></svg></NavButton>
              <Tabs>
                <SheetTab $active><TabShape active /><span>Sheet1</span></SheetTab>
                <SheetTab><TabShape /><span>Sheet2</span></SheetTab>
                <SheetTab><TabShape /><span>Sheet3</span></SheetTab>
              </Tabs>
            </TabZone>
            <HScroll>
              <ScrollArrow aria-label="Scroll left"><svg width="4" height="7" viewBox="0 0 4 7"><path d="M4 0v7L0 3.500z" fill="#444" /></svg></ScrollArrow>
              <Track $row><Thumb $row><ThumbGrip $row /></Thumb></Track>
              <ScrollArrow aria-label="Scroll right"><svg width="4" height="7" viewBox="0 0 4 7"><path d="M0 0v7l4-3.500z" fill="#444" /></svg></ScrollArrow>
              <SizeGrip />
            </HScroll>
          </SheetBar>
        </Client>
      </Window>
      <TaskbarClip>
        <Taskbar>
          <StartSlot aria-label="Start">
            <svg width="36" height="36" viewBox="0 0 36 36">
              <circle cx="18" cy="18" r="17" fill="#2f6ea8" stroke="#c6dcee" />
              <path d="M17 11c5-2 8 0 12 1l-2 7c-4-2-7-2-11 0z" fill="#8cc751" />
              <path d="M15 20c4-2 8-1 11 0l-2 7c-4-2-7-2-11 0z" fill="#f5c93c" />
            </svg>
          </StartSlot>
          <TaskIcon $w={71} aria-label="Internet Explorer">
            <svg width="32" height="32" viewBox="0 0 32 32" fill="none">
              <circle cx="17" cy="17" r="9.500" stroke="#2e8fdd" strokeWidth="6" />
              <path d="M9 17.500h18" stroke="#62bdf3" strokeWidth="4" />
              <path d="M21 21h9" stroke="#1f4a72" strokeWidth="3" />
              <path d="M3 28C2 18 18 3 29 3c2 0 2 3 0 6" stroke="#f1bf37" strokeWidth="2.500" />
            </svg>
          </TaskIcon>
          <TaskButton>
            <svg width="26" height="32" viewBox="0 0 26 32"><path d="M3 4l8-2 3 3v25H3z" fill="#f3e29a" stroke="#c2a855" /><path d="M12 4l11-1v26l-11 2z" fill="#f9eeb4" stroke="#cbb263" /></svg>
            <span>C:\Glenn\HTML\...</span>
          </TaskButton>
          <TaskIcon $w={61} aria-label="Outlook">
            <svg width="30" height="32" viewBox="0 0 30 32" fill="none"><path d="M2 3h26v28H2z" fill="#fbe0a1" stroke="#d08a1a" strokeWidth="2" /><circle cx="12" cy="13" r="6.500" fill="#fff8e4" stroke="#b37417" strokeWidth="2" /><path d="M12 9v4h4" stroke="#7d4c08" strokeWidth="1.500" /><path d="M15 18h11v9H15z" fill="#fff" stroke="#c98216" /><path d="M15 18l5.500 5 5.500-5" stroke="#c98216" /></svg>
          </TaskIcon>
          <TaskIcon $w={62} aria-label="Media Player">
            <svg width="30" height="32" viewBox="0 0 30 32"><path d="M5 4h23v24H5z" fill="#5ea6dc" stroke="#bfe0f5" /><path d="M23 4v24M26 4v24" stroke="#3a7ab3" /><circle cx="13" cy="17" r="10" fill="#f0761e" stroke="#fbd3a8" /><path d="M10 11l8 6-8 6z" fill="#fff" /></svg>
          </TaskIcon>
          <TaskButton $active><ExcelIcon s={28} /><span>Microsoft Excel - ...</span></TaskButton>
          <TaskButton>
            <svg width="28" height="32" viewBox="0 0 28 32" fill="none"><path d="M4 5l6-2 4 3 6-3 5 3v22H4z" fill="#6cc05a" stroke="#b8892c" /><path d="M14 3h5v4h-5z" fill="#e04040" /><path d="M3 9h11l3-3h9v23H3z" fill="#f8ef9c" stroke="#d59b2c" strokeWidth="1.500" /><path d="M10 14v3M18 14v3M8 20c3 5 9 5 12 0" stroke="#5b4a12" strokeWidth="1.500" /></svg>
            <span>GlobalSCAPE - Cu...</span>
          </TaskButton>
          <TaskButton>
            <svg width="32" height="34" viewBox="0 0 32 34"><path d="M0 0h7v7H0z" fill="#fc0" /><path d="M7 0h25v7H7z" fill="#3434ff" /><path d="M0 7h7v27H0z" fill="#0a8a1c" /><path d="M7 7h25v27H7z" fill="#0a0a0a" /><path d="M11 30l-3-8 7 2-3-9 6 5-1-10 5 6 2-8 3 7 5-6v21H11z" fill="#ffb515" /><path d="M20 30l2-10 3 7 4-6 2 9z" fill="#f07f10" /></svg>
            <span>Adobe PhotoDelu...</span>
          </TaskButton>
          <Tray>
            <TaskIcon $w={24} aria-label="Sync"><svg width="16" height="16" viewBox="0 0 16 16"><circle cx="8" cy="8" r="7.500" fill="#3f9a3c" /><path d="M3 8a5 5 0 019-3l1-1v4H9l1.500-1.500A3 3 0 005 8zM13 9a5 5 0 01-9 3l-1 1V9h4l-1.500 1.500A3 3 0 0011 9z" fill="#fff" /></svg></TaskIcon>
            <TaskIcon $w={24} aria-label="Display"><svg width="16" height="16" viewBox="0 0 16 16"><path d="M3 2h11v12H3z" fill="#eee" /><path d="M9 7h5v7H9z" fill="#3cc4ea" /><path d="M4 8h5v6H4z" fill="#222" /><circle cx="8" cy="8" r="6.500" fill="none" stroke="#e01818" strokeWidth="2" /><path d="M3.500 12.500l9-9" stroke="#e01818" strokeWidth="2" /></svg></TaskIcon>
            <TaskIcon $w={24} aria-label="Safely remove"><svg width="16" height="16" viewBox="0 0 16 16"><path d="M3 0h6v5H3z" fill="#b4b9c0" /><path d="M1 5h9v10H1z" fill="#6e757f" /><circle cx="11" cy="10.500" r="5" fill="#3aa63e" /><path d="M8.500 10.500l2 2 3-4" stroke="#fff" strokeWidth="1.600" fill="none" /></svg></TaskIcon>
            <TaskIcon $w={24} aria-label="Security"><svg width="16" height="16" viewBox="0 0 16 16"><path d="M1 5h13v10H1z" fill="#19a83a" /><path d="M8 5V2h7v3" fill="none" stroke="#19a83a" strokeWidth="2.500" /><path d="M4 10l3 3 5-5" stroke="#fff" strokeWidth="2" fill="none" /></svg></TaskIcon>
            <TaskIcon $w={24} aria-label="Windows Update"><svg width="16" height="16" viewBox="0 0 16 16"><path d="M3 1h11v13H3z" fill="#c4e6f8" /><path d="M4 3h4v4H4z" fill="#e46a3a" /><path d="M9 3h4v4H9z" fill="#7cc242" /><path d="M4 8h4v4H4z" fill="#3a7ddb" /><path d="M9 8h4v4H9z" fill="#f4c934" /><path d="M1 12c6 2 12-2 14-9" stroke="#e79a2e" strokeWidth="2" fill="none" /></svg></TaskIcon>
            <TaskIcon $w={24} aria-label="Power"><svg width="16" height="16" viewBox="0 0 16 16" fill="none"><path d="M2 2h7v12H2zM4 .5h3" stroke="#fff" strokeWidth="1.400" /><path d="M8 6h7v4l-2 2h-3l-2-2zM10 3v3M13 3v3M11.500 12v4" fill="#fff" stroke="#fff" strokeWidth="1.400" /></svg></TaskIcon>
            <TaskIcon $w={24} aria-label="Volume"><svg width="16" height="16" viewBox="0 0 16 16" fill="none"><path d="M1 5h3l5-5v15l-5-5H1z" fill="#e9c9bf" stroke="#a04a30" /><path d="M11 5c1 2 1 4 0 6M13.500 3c2 3 2 7 0 10" stroke="#d9583a" strokeWidth="1.400" /></svg></TaskIcon>
            <TaskIcon $w={24} aria-label="Action center"><svg width="16" height="16" viewBox="0 0 16 16" fill="none"><path d="M2.500 1v15" stroke="#fff" strokeWidth="1.500" /><path d="M3 2h11v7H3z" fill="#fff" /><circle cx="11" cy="10" r="4.500" fill="#d8352b" /><path d="M9 8l4 4M13 8l-4 4" stroke="#fff" strokeWidth="1.500" /></svg></TaskIcon>
          </Tray>
        </Taskbar>
      </TaskbarClip>
    </Desktop>
  );
}
